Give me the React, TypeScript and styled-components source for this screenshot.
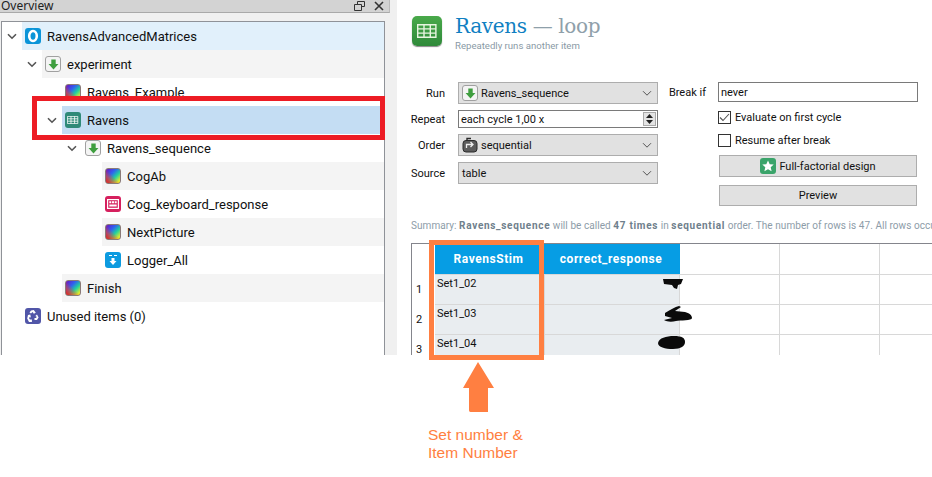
import React from "react";
import styled, { createGlobalStyle } from "styled-components";

const Global = createGlobalStyle`
  html, body { margin: 0; padding: 0; background: #fff; }
  * { box-sizing: border-box; }
`;

const UI = `"Noto Sans", "Open Sans", sans-serif`;

const Page = styled.div`
  position: relative;
  width: 932px;
  height: 477px;
  overflow: hidden;
  background: #fff;
  font-family: Roboto, "Noto Sans", sans-serif;
  color: #111;
`;
const Workspace = styled.div`
  display: flex;
  height: 355px;
  overflow: hidden;
`;
const Sidebar = styled.aside`
  flex: 0 0 397px;
  background: #f0f0f0;
  display: flex;
  flex-direction: column;
`;
const DockHeader = styled.div`
  width: 390px;
  height: 13px;
  flex: none;
  background: #d3d3d3;
  border-bottom: 1px solid #a9a9a9;
  border-right: 1px solid #bbb;
  display: flex;
  align-items: center;
  gap: 9px;
  padding-right: 5px;
  overflow: hidden;
`;
const DockTitle = styled.span`
  flex: 1;
  font-family: ${UI};
  font-size: 12px;
  line-height: 12px;
  padding-left: 1px;
  color: #222;
`;
const TreeBox = styled.div`
  margin: 8px 0 0 1px;
  width: 384px;
  flex: 1;
  background: #fff;
  border: 1px solid #8f9298;
  border-bottom: 0;
`;
const Row = styled.div<{ $depth: number; $tone?: string }>`
  height: 28px;
  margin-left: ${(p) => 20 + p.$depth * 20}px;
  background: ${(p) => p.$tone || "transparent"};
  display: flex;
  align-items: center;
  gap: 6px;
  padding-left: 3px;
  position: relative;
  font-size: 13px;
  color: #111;
`;
const Chevron = styled.svg`
  position: absolute;
  left: -15px;
  top: 11px;
  width: 10px;
  height: 7px;
`;
const IconBox = styled.span<{ $bg: string }>`
  width: 16px;
  height: 16px;
  flex: none;
  border-radius: 3px;
  background: ${(p) => p.$bg};
  display: inline-flex;
  align-items: center;
  justify-content: center;
`;
const Rainbow = styled.span`
  width: 16px;
  height: 16px;
  flex: none;
  border-radius: 3px;
  border: 1px solid #8a7a78;
  background:
    linear-gradient(45deg, #f01818 0%, rgba(240, 60, 40, 0.65) 25%, rgba(240, 60, 40, 0) 52%),
    linear-gradient(135deg, #7010c0 0%, #3060f0 35%, #20d0a0 62%, #f0f020 92%);
`;
const SeqBox = styled.span`
  width: 16px;
  height: 16px;
  flex: none;
  border-radius: 3px;
  background: #f4f4f4;
  border: 1px solid #a0a0a0;
  display: inline-flex;
  align-items: center;
  justify-content: center;
`;

const Editor = styled.main`
  flex: 1;
  min-width: 0;
  padding: 16px 0 0 14px;
  background: #fff;
`;
const EditorHead = styled.header`
  display: flex;
  align-items: flex-start;
  gap: 13px;
  height: 66px;
  padding-left: 1px;
`;
const BigIcon = styled.span`
  width: 30px;
  height: 30px;
  flex: none;
  border-radius: 5px;
  background: linear-gradient(#49a94a, #2f8a3a);
  display: inline-flex;
  align-items: center;
  justify-content: center;
  box-shadow: 0 1px 1px #888;
`;
const Titles = styled.div`
  display: flex;
  flex-direction: column;
`;
const Title = styled.h1`
  margin: -3px 0 0;
  font-family: "DejaVu Serif", serif;
  font-weight: 400;
  font-size: 20px;
  letter-spacing: -0.35px;
  line-height: 26px;
  color: #8fa0aa;
`;
const TitleName = styled.span`
  color: #0f7fc2;
`;
const Subtitle = styled.div`
  font-size: 9.6px;
  line-height: 12px;
  margin-top: 1px;
  color: #8a9aa6;
`;
const Form = styled.div`
  display: flex;
  gap: 11px;
`;
const LeftGrid = styled.div`
  display: grid;
  grid-template-columns: 34px 200px;
  grid-template-rows: 22px 18px 22px 22px;
  column-gap: 13px;
  row-gap: 6px;
  align-items: center;
`;
const RightGrid = styled.div`
  display: grid;
  grid-template-columns: 37px 200px;
  grid-template-rows: 20px 15px 14px 22px 21px;
  column-gap: 12px;
  row-gap: 8px;
  align-items: center;
`;
const Label = styled.label`
  display: flex;
  justify-content: flex-end;
  font-size: 11px;
  padding-top: 1px;
  white-space: nowrap;
  color: #111;
`;
const Combo = styled.div`
  height: 22px;
  background: #e1e1e1;
  border: 1px solid #adadad;
  display: flex;
  align-items: center;
  gap: 3px;
  padding: 0 5px 0 3px;
  font-size: 11px;
  color: #111;
`;
const ComboText = styled.span`
  flex: 1;
  padding-top: 1px;
`;
const Field = styled.div`
  height: 100%;
  border: 1px solid #7a7a7a;
  background: #fff;
  display: flex;
  align-items: center;
  padding-left: 2px;
  font-size: 11px;
`;
const SpinBox = styled.div`
  width: 13px;
  height: 14px;
  margin: 0 1px 0 auto;
  display: flex;
  flex-direction: column;
  background: #e4e4e4;
  border: 1px solid #aaa;
`;
const SpinPart = styled.span`
  flex: 1;
  display: flex;
  align-items: center;
  justify-content: center;
`;
const Spacer = styled.span``;
const Check = styled.div`
  display: flex;
  align-items: center;
  gap: 4px;
  font-size: 11px;
`;
const CheckBox = styled.span`
  width: 13px;
  height: 13px;
  border: 1px solid #333;
  background: #fff;
  display: inline-flex;
  align-items: center;
  justify-content: center;
`;
const ActionButton = styled.div`
  margin: 0 1px;
  height: 100%;
  background: #e1e1e1;
  border: 1px solid #adadad;
  display: flex;
  align-items: center;
  justify-content: center;
  gap: 3px;
  font-size: 11px;
  color: #111;
`;
const Summary = styled.p`
  margin: 14px 0 0;
  height: 12px;
  font-size: 10px;
  line-height: 12px;
  white-space: nowrap;
  color: #8d9ca8;
  letter-spacing: 0.06px;
  b { font-weight: 700; color: #6f808c; letter-spacing: 0.7px; }
`;
const Table = styled.div`
  margin-top: 11px;
  display: grid;
  grid-template-columns: 23px 110px 135px 100px 100px 100px;
  grid-auto-rows: 30px;
  border-top: 1px solid #84858c;
  border-left: 1px solid #84858c;
  width: 560px;
`;
const Corner = styled.div`
  background: #fff;
`;
const HeaderCell = styled.div`
  background: #069de4;
  color: #fff;
  font-weight: 700;
  font-size: 12px;
  letter-spacing: 0.55px;
  display: flex;
  align-items: center;
  justify-content: center;
  padding-right: 3px;
`;
const RowNumber = styled.div`
  font-size: 11px;
  display: flex;
  align-items: center;
  padding: 0 0 0 4px;
  height: 26px;
  align-self: start;
  margin-top: 2px;
`;
const Cell = styled.div<{ $empty?: boolean }>`
  background: ${(p) => (p.$empty ? "#fff" : "#e9edf0")};
  border-right: 1px solid #d8d8d8;
  border-top: 1px solid #d8d8d8;
  padding: 2px 0 0 2px;
  font-size: 11px;
  line-height: 14px;
`;
const EmptyHead = styled.div`
  border-right: 1px solid #d8d8d8;
`;

/* Annotations drawn over the screenshot */
const RedFrame = styled.div`
  position: absolute;
  left: 32px;
  top: 96px;
  width: 353px;
  height: 44px;
  border: 5px solid #ed1c24;
`;
const OrangeFrame = styled.div`
  position: absolute;
  left: 429px;
  top: 240px;
  width: 115px;
  height: 120px;
  border: 5px solid #ff7f41;
`;
const UpArrow = styled.svg`
  position: absolute;
  left: 462px;
  top: 362px;
  width: 33px;
  height: 51px;
`;
const Note = styled.div`
  position: absolute;
  left: 428px;
  top: 426px;
  width: 120px;
  font-family: "Liberation Sans", Arial, sans-serif;
  font-size: 15.5px;
  line-height: 18px;
  color: #ff7f41;
`;
const Scribble = styled.svg`
  position: absolute;
  left: 650px;
  top: 272px;
  width: 50px;
  height: 84px;
`;

const Down = () => (
  <Chevron viewBox="0 0 10 7">
    <path d="M1 1.2 5 5.2 9 1.2" fill="none" stroke="#555" strokeWidth="1.6" />
  </Chevron>
);

const Seq = () => (
  <SeqBox>
    <svg width="11" height="11" viewBox="0 0 10 10">
      <path d="M3 0.500h4v4h2.500L5 9.500 0.500 4.500H3z" fill="#3f9e3f" />
    </svg>
  </SeqBox>
);

const TableGlyph = ({ size = 10, color = "#fff" }: { size?: number; color?: string }) => (
  <svg width={size * 1.4} height={size} viewBox="0 0 14 10">
    <path d="M.5.5h13v9H.5zM.5 3.500h13M.5 6.500h13M5 .5v9M9.500.5v9" fill="none" stroke={color} strokeWidth="1" />
  </svg>
);

const OpenIcon = () => (
  <IconBox $bg="#0a94d8">
    <svg width="12" height="14" viewBox="0 0 12 14">
      <ellipse cx="6" cy="7" rx="3.800" ry="5" fill="none" stroke="#fff" strokeWidth="2.600" />
    </svg>
  </IconBox>
);

const KeyIcon = () => (
  <IconBox $bg="#d6205e">
    <svg width="12" height="10" viewBox="0 0 12 10">
      <rect x="0.600" y="0.600" width="10.800" height="8.800" fill="none" stroke="#fff" strokeWidth="1.200" />
      <path d="M2.300 2.300h2v2h-2zM5 2.300h2v2H5zM7.700 2.300h2v2h-2zM2.300 5.500h7.400v2H2.300z" fill="#fff" />
    </svg>
  </IconBox>
);

const LoggerIcon = () => (
  <IconBox $bg="#0c9be0">
    <svg width="12" height="12" viewBox="0 0 12 12">
      <path d="M2 1.500h3M7 1.500h3" stroke="#fff" strokeWidth="1" />
      <path d="M4.500 4h3v3h2L6 11 2.500 7h2z" fill="#fff" />
    </svg>
  </IconBox>
);

const TrashIcon = () => (
  <IconBox $bg="#5156a8">
    <svg width="14" height="14" viewBox="0 0 14 14">
      <path
        d="M5 1.500 7.800 1l2 2.800-2 1L6.600 3 5 4.500 3.500 3.400zM11 5.500l1.600 3-1.600 2.600H8.500V9h1.600l.6-1.200-1.400-.9zM2 6l2.300-.6.6 3L3.600 8l-.5 1.300.8 1.200h2V13H3L1.200 9.600z"
        fill="#fff"
      />
    </svg>
  </IconBox>
);

const Arrows = () => (
  <svg width="10" height="7" viewBox="0 0 10 7" style={{ flex: "none" }}>
    <path d="M1 1.200 5 5.200 9 1.200" fill="none" stroke="#555" strokeWidth="1" />
  </svg>
);

const OrderIcon = () => (
  <svg width="16" height="16" viewBox="0 0 16 16" style={{ flex: "none" }}>
    <rect x="1" y="3.500" width="14" height="11.500" rx="3" fill="#5c5c5c" stroke="#2a2a2a" />
    <path d="M4.500 11V7.500h6M8.500 5l2.500 2.500L8.500 10" fill="none" stroke="#eee" strokeWidth="1.300" />
    <path d="M5 3.500V1.500h4" fill="none" stroke="#2a2a2a" strokeWidth="1.400" />
  </svg>
);

const Star = () => (
  <IconBox $bg="#3aa46a">
    <svg width="14" height="14" viewBox="0 0 14 14">
      <path d="M7 1.500 8.700 5.200l4 .4-3 2.700.9 4L7 10.200l-3.600 2.100.9-4-3-2.700 4-.4z" fill="#fff" />
    </svg>
  </IconBox>
);

type Item = { depth: number; name: string; icon: React.ReactNode; tone?: string; open?: boolean };
const ODD = "#f4f4f4";
const items: Item[] = [
  { depth: 0, name: "RavensAdvancedMatrices", icon: <OpenIcon />, tone: "#e1f0fb", open: true },
  { depth: 1, name: "experiment", icon: <Seq />, tone: ODD, open: true },
  { depth: 2, name: "Ravens_Example", icon: <Rainbow /> },
  { depth: 2, name: "Ravens", icon: <IconBox $bg="#2f8a78"><TableGlyph size={8} /></IconBox>, tone: "#c4ddf3", open: true },
  { depth: 3, name: "Ravens_sequence", icon: <Seq />, open: true },
  { depth: 4, name: "CogAb", icon: <Rainbow />, tone: ODD },
  { depth: 4, name: "Cog_keyboard_response", icon: <KeyIcon /> },
  { depth: 4, name: "NextPicture", icon: <Rainbow />, tone: ODD },
  { depth: 4, name: "Logger_All", icon: <LoggerIcon /> },
  { depth: 2, name: "Finish", icon: <Rainbow />, tone: ODD },
  { depth: 0, name: "Unused items (0)", icon: <TrashIcon /> },
];

const rows = [
  { n: 1, stim: "Set1_02" },
  { n: 2, stim: "Set1_03" },
  { n: 3, stim: "Set1_04" },
];

export default function App() {
  return (
    <Page>
      <Global />
      <Workspace>
        <Sidebar>
          <DockHeader>
            <DockTitle>Overview</DockTitle>
            <svg width="11" height="10" viewBox="0 0 11 10">
              <path d="M3.500 3V.5h7v5H8M.5 3.500h7v6h-7z" fill="none" stroke="#333" />
            </svg>
            <svg width="10" height="10" viewBox="0 0 10 10">
              <path d="M1 1l8 8M9 1 1 9" stroke="#333" strokeWidth="1.600" />
            </svg>
          </DockHeader>
          <TreeBox>
            {items.map((it) => (
              <Row key={it.name} $depth={it.depth} $tone={it.tone}>
                {it.open && <Down />}
                {it.icon}
                <span>{it.name}</span>
              </Row>
            ))}
          </TreeBox>
        </Sidebar>
        <Editor>
          <EditorHead>
            <BigIcon>
              <TableGlyph size={14} color="#e8f5e0" />
            </BigIcon>
            <Titles>
              <Title>
                <TitleName>Ravens</TitleName> — loop
              </Title>
              <Subtitle>Repeatedly runs another item</Subtitle>
            </Titles>
          </EditorHead>
          <Form>
            <LeftGrid>
              <Label>Run</Label>
              <Combo>
                <Seq />
                <ComboText>Ravens_sequence</ComboText>
                <Arrows />
              </Combo>
              <Label>Repeat</Label>
              <Field>
                each cycle 1,00 x
                <SpinBox>
                  <SpinPart>
                    <svg width="7" height="4" viewBox="0 0 7 4"><path d="M3.500 0 7 4H0z" fill="#222" /></svg>
                  </SpinPart>
                  <SpinPart>
                    <svg width="7" height="4" viewBox="0 0 7 4"><path d="M3.500 4 7 0H0z" fill="#222" /></svg>
                  </SpinPart>
                </SpinBox>
              </Field>
              <Label>Order</Label>
              <Combo>
                <OrderIcon />
                <ComboText>sequential</ComboText>
                <Arrows />
              </Combo>
              <Label>Source</Label>
              <Combo>
                <ComboText>table</ComboText>
                <Arrows />
              </Combo>
            </LeftGrid>
            <RightGrid>
              <Label>Break if</Label>
              <Field>never</Field>
              <Spacer />
              <Check>
                <CheckBox>
                  <svg width="11" height="9" viewBox="0 0 11 9">
                    <path d="M1 4.500 4 7.500 10 1" fill="none" stroke="#555" strokeWidth="1.100" />
                  </svg>
                </CheckBox>
                Evaluate on first cycle
              </Check>
              <Spacer />
              <Check>
                <CheckBox />
                Resume after break
              </Check>
              <Spacer />
              <ActionButton>
                <Star />
                Full-factorial design
              </ActionButton>
              <Spacer />
              <ActionButton>Preview</ActionButton>
            </RightGrid>
          </Form>
          <Summary>
            Summary: <b>Ravens_sequence</b> will be called <b>47 times</b> in <b>sequential</b> order. The number of rows is 47. All rows occur once, in random order
          </Summary>
          <Table>
            <Corner />
            <HeaderCell>RavensStim</HeaderCell>
            <HeaderCell>correct_response</HeaderCell>
            <EmptyHead />
            <EmptyHead />
            <EmptyHead />
            {rows.map((r) => (
              <React.Fragment key={r.n}>
                <RowNumber>{r.n}</RowNumber>
                <Cell>{r.stim}</Cell>
                <Cell />
                <Cell $empty />
                <Cell $empty />
                <Cell $empty />
              </React.Fragment>
            ))}
          </Table>
        </Editor>
      </Workspace>

      <RedFrame />
      <OrangeFrame />
      <Scribble viewBox="0 0 50 84">
        <path d="M13 7h20l-2 5-3 1-1 4-3-1-2-3-8-1z" fill="#0a0a0a" />
        <path d="M15 41c5-3 10-6 14-7l2 1-6 4 10 1c4 1 7 3 7 6s-12 2-16 3-9 1-12-1l8-2-7-2z" fill="#0a0a0a" />
        <path d="M8 71c1-5 8-7 16-7s11 2 11 6-4 7-12 7-15-2-15-6z" fill="#0a0a0a" />
      </Scribble>
      <UpArrow viewBox="0 0 33 51">
        <path d="M16 0 32 26H26V50H8.500C7.500 50 7 49 7 48V26H1z" fill="#ff7f41" />
      </UpArrow>
      <Note>
        Set number &amp;
        <br />
        Item Number
      </Note>
    </Page>
  );
}
